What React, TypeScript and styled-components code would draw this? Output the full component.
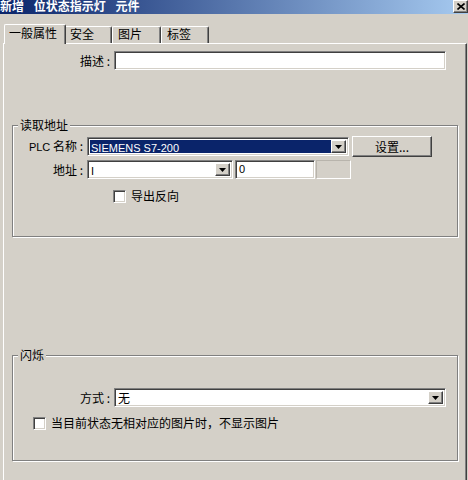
import styled, { createGlobalStyle, css } from 'styled-components';

const GlobalStyle = createGlobalStyle`
  html, body {
    margin: 0;
    padding: 0;
    background: #d4d0c8;
  }
  body {
    font-family: "Noto Sans CJK SC", "Liberation Sans", sans-serif;
    font-size: 12px;
    color: #000;
  }
`;

// classic win32 bevels
const sunken = css`
  box-sizing: border-box;
  border: 1px solid;
  border-color: #808080 #fff #fff #808080;
  box-shadow: inset 1px 1px 0 #404040, inset -1px -1px 0 #d4d0c8;
`;

const raised = css`
  box-sizing: border-box;
  border: 1px solid;
  border-color: #fff #404040 #404040 #fff;
  box-shadow: inset -1px -1px 0 #808080;
  background: #d4d0c8;
`;

const Window = styled.div`
  width: 468px;
  height: 480px;
  overflow: hidden;
  background: #d4d0c8;
  display: flex;
  flex-direction: column;
`;

const TitleBar = styled.div`
  flex: none;
  height: 14px;
  display: flex;
  justify-content: space-between;
  align-items: flex-start;
  background: linear-gradient(to right, #0a246a, #a6caf0);
  overflow: hidden;
`;

const Title = styled.div`
  color: #fff;
  font-weight: bold;
  font-size: 12px;
  line-height: 13px;
  margin-top: -1px;
  word-spacing: 7px;
  white-space: nowrap;
`;

const CloseButton = styled.div`
  ${raised};
  width: 15px;
  height: 13px;
  display: flex;
  align-items: center;
  justify-content: center;
`;

const TabStrip = styled.div`
  flex: none;
  height: 29px;
  display: flex;
  align-items: flex-end;
  padding-left: 4px;
`;

const Tab = styled.div<{ $active?: boolean; $width: number }>`
  box-sizing: border-box;
  width: ${p => p.$width}px;
  height: ${p => (p.$active ? 20 : 17)}px;
  margin-bottom: ${p => (p.$active ? -1 : 0)}px;
  margin-right: ${p => (p.$active ? -2 : 0)}px;
  padding: ${p => (p.$active ? '2px 0 0 4px' : '1px 0 0 5px')};
  position: relative;
  z-index: ${p => (p.$active ? 1 : 0)};
  background: #d4d0c8;
  border-top: 1px solid #fff;
  border-left: 1px solid #fff;
  border-right: 1px solid #404040;
  border-radius: 2px 2px 0 0;
  box-shadow: inset -1px 0 0 #808080;
  line-height: 12px;
  white-space: nowrap;
`;

const Panel = styled.div`
  flex: 1;
  box-sizing: border-box;
  width: 464px;
  margin-left: 3px;
  border-top: 1px solid #fff;
  border-left: 1px solid #fff;
  border-right: 1px solid #404040;
  box-shadow: inset -1px 0 0 #808080;
  display: flex;
  flex-direction: column;
`;

const Row = styled.div<{ $top: number; $indent?: number }>`
  display: flex;
  align-items: center;
  margin-top: ${p => p.$top}px;
  padding-left: ${p => p.$indent ?? 0}px;
`;

const Label = styled.div<{ $width: number }>`
  box-sizing: border-box;
  width: ${p => p.$width}px;
  padding-right: 4px;
  text-align: right;
  line-height: 14px;
  white-space: nowrap;
`;

const Latin = styled.span`
  font-family: "Liberation Sans", sans-serif;
  font-size: 11px;
`;

const TextBox = styled.div<{ $width: number; $gap?: number }>`
  ${sunken};
  width: ${p => p.$width}px;
  height: 19px;
  margin-left: ${p => p.$gap ?? 0}px;
  background: #fff;
  padding: 2px 0 0 3px;
  font-family: "Liberation Sans", sans-serif;
  font-size: 11px;
  line-height: 13px;
`;

const Blank = styled.div<{ $width: number; $gap?: number }>`
  box-sizing: border-box;
  width: ${p => p.$width}px;
  height: 19px;
  margin-left: ${p => p.$gap ?? 0}px;
  border: 1px solid;
  border-color: #b8b4ac #fff #fff #b8b4ac;
`;

const Combo = styled.div<{ $width: number }>`
  ${sunken};
  width: ${p => p.$width}px;
  height: 19px;
  padding: 2px;
  background: #fff;
  display: flex;
`;

const ComboValue = styled.div<{ $selected?: boolean }>`
  flex: 1;
  padding-left: 1px;
  background: ${p => (p.$selected ? '#0a246a' : '#fff')};
  color: ${p => (p.$selected ? '#fff' : '#000')};
  font-size: 12px;
  line-height: 13px;
  white-space: nowrap;
`;

const DropButton = styled.div`
  ${raised};
  width: 15px;
  display: flex;
  align-items: center;
  justify-content: center;
`;

const PushButton = styled.div<{ $width: number }>`
  ${raised};
  width: ${p => p.$width}px;
  height: 21px;
  margin-left: 3px;
  display: flex;
  align-items: center;
  justify-content: center;
  line-height: 14px;
`;

const Group = styled.div<{ $height: number; $top: number }>`
  box-sizing: border-box;
  height: ${p => p.$height}px;
  margin: ${p => p.$top}px 8px 0 8px;
  border: 1px solid #808080;
  box-shadow: 1px 1px 0 #fff, inset 1px 1px 0 #fff;
  display: flex;
  flex-direction: column;
`;

const Legend = styled.div`
  align-self: flex-start;
  height: 14px;
  margin: -8px 0 0 5px;
  padding: 0 2px;
  background: #d4d0c8;
  line-height: 14px;
`;

const CheckBox = styled.div`
  ${sunken};
  flex: none;
  width: 13px;
  height: 13px;
  background: #fff;
`;

const CheckLabel = styled.div`
  margin-left: 5px;
  line-height: 14px;
  white-space: nowrap;
`;

const Arrow = () => (
  <svg width="7" height="4" viewBox="0 0 7 4">
    <polygon points="0,0 7,0 3.5,4" fill="#000" />
  </svg>
);

const Combobox = ({ width, children, selected }: { width: number; children: React.ReactNode; selected?: boolean }) => (
  <Combo $width={width}>
    <ComboValue $selected={selected}>{children}</ComboValue>
    <DropButton>
      <Arrow />
    </DropButton>
  </Combo>
);

export default function App() {
  return (
    <Window>
      <GlobalStyle />
      <TitleBar>
        <Title>新增 位状态指示灯 元件</Title>
        <CloseButton>
          <svg width="8" height="7" viewBox="0 0 8 7">
            <path d="M0.5 0.5 L7.5 6.5 M7.5 0.5 L0.5 6.5" stroke="#000" strokeWidth="1.6" />
          </svg>
        </CloseButton>
      </TitleBar>

      <TabStrip>
        <Tab $active $width={62}>一般属性</Tab>
        <Tab $width={48}>安全</Tab>
        <Tab $width={49}>图片</Tab>
        <Tab $width={48}>标签</Tab>
      </TabStrip>

      <Panel>
        <Row $top={7}>
          <Label $width={110}>描述 :</Label>
          <TextBox $width={332} />
        </Row>

        <Group $top={55} $height={112}>
          <Legend>读取地址</Legend>
          <Row $top={4}>
            <Label $width={74}>
              <Latin>PLC</Latin> 名称 :
            </Label>
            <Combobox width={262} selected>
              <Latin>SIEMENS S7-200</Latin>
            </Combobox>
            <PushButton $width={80}>设置...</PushButton>
          </Row>
          <Row $top={3}>
            <Label $width={74}>地址 :</Label>
            <Combobox width={146}>
              <Latin>I</Latin>
            </Combobox>
            <TextBox $width={80} $gap={2}>0</TextBox>
            <Blank $width={35} $gap={1} />
          </Row>
          <Row $top={10} $indent={100}>
            <CheckBox />
            <CheckLabel>导出反向</CheckLabel>
          </Row>
        </Group>

        <Group $top={118} $height={106}>
          <Legend>闪烁</Legend>
          <Row $top={26}>
            <Label $width={101}>方式 :</Label>
            <Combobox width={332}>无</Combobox>
          </Row>
          <Row $top={9} $indent={20}>
            <CheckBox />
            <CheckLabel>当目前状态无相对应的图片时，不显示图片</CheckLabel>
          </Row>
        </Group>
      </Panel>
    </Window>
  );
}
